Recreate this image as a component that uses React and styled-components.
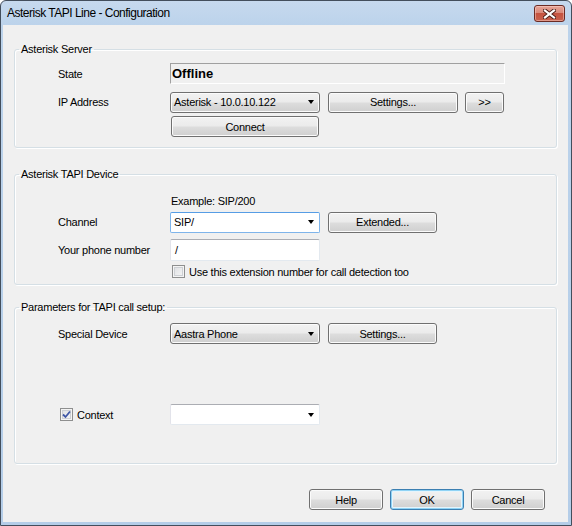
import styled, { createGlobalStyle, css } from "styled-components";

const GlobalStyle = createGlobalStyle`
  html, body {
    margin: 0;
    padding: 0;
    background: #ffffff;
  }
  body {
    font-family: "Liberation Sans", Arial, sans-serif;
    font-size: 11px;
    letter-spacing: -0.25px;
    color: #000;
  }
`;

const Window = styled.div`
  width: 572px;
  height: 526px;
  box-sizing: border-box;
  border: 1px solid #434e5c;
  border-radius: 6px 6px 0 0;
  background: linear-gradient(#c6d9ee, #bcd3eb 24px, #b4cde8);
  padding: 0 3px 3px 2px;
  display: flex;
  flex-direction: column;
  overflow: hidden;
`;

const TitleBar = styled.div`
  height: 24px;
  flex: none;
  display: flex;
  align-items: flex-start;
  justify-content: space-between;
`;

const Title = styled.span`
  margin: 5px 0 0 4px;
  font-size: 12px;
  letter-spacing: -0.5px;
  line-height: 15px;
`;

const CloseButton = styled.div`
  width: 31px;
  height: 17px;
  box-sizing: border-box;
  margin: 4px 3px 0 0;
  border: 1px solid #6b2b24;
  border-radius: 3px;
  background: linear-gradient(#e6a497, #d98a7b 45%, #c55340 50%, #c8624f);
  box-shadow: inset 0 0 0 1px rgba(255, 220, 210, 0.45);
  display: flex;
  align-items: center;
  justify-content: center;
`;

const Client = styled.div`
  flex: 1;
  background: #f0f0f0;
  display: flex;
  flex-direction: column;
  padding: 0 11px;
`;

const Group = styled.fieldset`
  margin: ${(p) => p.$top}px 0 0;
  padding: 0 0 ${(p) => p.$bottom}px;
  border: 1px solid #d5dfe5;
  border-radius: 3px;
  box-shadow: inset 1px 1px 0 #ffffff, 1px 1px 0 #ffffff;
  min-width: 0;
`;

const Legend = styled.legend`
  margin-left: 4px;
  padding: 0 2px;
  line-height: 13px;
`;

const Row = styled.div`
  display: flex;
  align-items: center;
  height: ${(p) => p.$h || 21}px;
  margin-top: ${(p) => p.$mt || 0}px;
  padding-left: 43px;
`;

const Label = styled.span`
  width: 112px;
  flex: none;
  display: flex;
  align-items: center;
`;

const Hint = styled.div`
  margin-top: ${(p) => p.$mt}px;
  padding-left: 156px;
  line-height: 13px;
`;

const StatusBox = styled.div`
  width: 335px;
  height: 21px;
  box-sizing: border-box;
  border: 1px solid;
  border-color: #a0a0a0 #ffffff #ffffff #a0a0a0;
  padding-left: 1px;
  display: flex;
  align-items: center;
  font-weight: bold;
  font-size: 13px;
  letter-spacing: 0;
`;

const buttonFace = css`
  border: 1px solid #707070;
  border-radius: 3px;
  background: linear-gradient(#f2f2f2, #ebebeb 48%, #dddddd 52%, #cfcfcf);
  box-shadow: inset 0 0 0 1px #fbfbfb;
`;

const Combo = styled.div`
  position: relative;
  width: 150px;
  height: 21px;
  box-sizing: border-box;
  padding-left: 3px;
  display: flex;
  align-items: center;
  ${(p) =>
    p.$kind === "list"
      ? buttonFace
      : css`
          background: #ffffff;
          border: 1px solid;
          border-radius: 2px;
          border-color: ${p.$focus
            ? "#569de5 #7eb4ea #7eb4ea #7eb4ea"
            : "#abadb3 #e3e9ef #e3e9ef #e2e3ea"};
        `}
`;

const Arrow = styled.span`
  position: absolute;
  right: 5px;
  top: 50%;
  margin-top: -2px;
  border-left: 3.5px solid transparent;
  border-right: 3.5px solid transparent;
  border-top: 4px solid #000;
`;

const TextField = styled.div`
  width: 150px;
  height: 22px;
  box-sizing: border-box;
  padding-left: 4px;
  display: flex;
  align-items: center;
  background: #ffffff;
  border: 1px solid;
  border-radius: 2px;
  border-color: #abadb3 #e3e9ef #e3e9ef #e2e3ea;
`;

const Button = styled.button`
  width: ${(p) => p.$w}px;
  height: 21px;
  margin-left: ${(p) => p.$ml || 0}px;
  padding: 0;
  font: inherit;
  letter-spacing: inherit;
  color: #000;
  ${buttonFace}
  ${(p) =>
    p.$default &&
    css`
      border-color: #3c7fb1;
      box-shadow: inset 0 0 0 1px #8fd3f5, inset 0 0 0 2px #e6f4fb;
    `}
`;

const Check = styled.span`
  width: 13px;
  height: 13px;
  box-sizing: border-box;
  flex: none;
  margin-left: ${(p) => p.$ml || 0}px;
  margin-right: ${(p) => p.$mr || 4}px;
  border: 1px solid #8e8f8f;
  background: linear-gradient(135deg, #dcdee1, #f7f7f7);
  box-shadow: inset 0 0 0 1px #f4f4f4, inset 0 0 0 2px #cdd0d4;
  display: flex;
  align-items: center;
  justify-content: center;
`;

const CheckRow = styled.div`
  display: flex;
  align-items: center;
  height: 13px;
  margin-top: ${(p) => p.$mt}px;
  padding-left: 156px;
`;

const Footer = styled.div`
  display: flex;
  justify-content: flex-end;
  gap: 7px;
  margin-top: 25px;
  padding-right: 12px;
`;

const CloseGlyph = () => (
  <svg width="13" height="10" viewBox="0 0 13 10">
    <path
      d="M2 1.5 L11 8.5 M11 1.5 L2 8.5"
      stroke="#4a1d17"
      strokeWidth="4"
      strokeLinecap="square"
    />
    <path
      d="M2 1.5 L11 8.5 M11 1.5 L2 8.5"
      stroke="#ffffff"
      strokeWidth="2.2"
      strokeLinecap="square"
    />
  </svg>
);

const Tick = () => (
  <svg width="9" height="9" viewBox="0 0 9 9">
    <path
      d="M1 4.5 L3.5 7 L8 1.5"
      fill="none"
      stroke="#3f57a6"
      strokeWidth="1.8"
    />
  </svg>
);

const App = () => {
  return (
    <>
      <GlobalStyle />
      <Window>
        <TitleBar>
          <Title>Asterisk TAPI Line - Configuration</Title>
          <CloseButton>
            <CloseGlyph />
          </CloseButton>
        </TitleBar>
        <Client>
          <Group $top={18} $bottom={10}>
            <Legend>Asterisk Server</Legend>
            <Row $mt={7} $h={21}>
              <Label>State</Label>
              <StatusBox>Offline</StatusBox>
            </Row>
            <Row $mt={7} $h={22}>
              <Label>IP Address</Label>
              <Combo $kind="list">
                Asterisk - 10.0.10.122
                <Arrow />
              </Combo>
              <Button $w={130} $ml={8}>
                Settings...
              </Button>
              <Button $w={39} $ml={7}>
                &gt;&gt;
              </Button>
            </Row>
            <Row $mt={3} $h={21}>
              <Label />
              <Button $w={148} $ml={1}>
                Connect
              </Button>
            </Row>
          </Group>

          <Group $top={20} $bottom={6}>
            <Legend>Asterisk TAPI Device</Legend>
            <Hint $mt={14}>Example: SIP/200</Hint>
            <Row $mt={3} $h={22}>
              <Label>Channel</Label>
              <Combo $focus>
                SIP/
                <Arrow />
              </Combo>
              <Button $w={109} $ml={8}>
                Extended...
              </Button>
            </Row>
            <Row $mt={6} $h={22}>
              <Label>Your phone number</Label>
              <TextField>/</TextField>
            </Row>
            <CheckRow $mt={4}>
              <Check $ml={1} />
              Use this extension number for call detection too
            </CheckRow>
          </Group>

          <Group $top={16} $bottom={38}>
            <Legend>Parameters for TAPI call setup:</Legend>
            <Row $mt={9} $h={21}>
              <Label>Special Device</Label>
              <Combo $kind="list">
                Aastra Phone
                <Arrow />
              </Combo>
              <Button $w={109} $ml={8}>
                Settings...
              </Button>
            </Row>
            <Row $mt={60} $h={21}>
              <Label>
                <Check $ml={2} $mr={4}>
                  <Tick />
                </Check>
                Context
              </Label>
              <Combo>
                <Arrow />
              </Combo>
            </Row>
          </Group>

          <Footer>
            <Button $w={74}>Help</Button>
            <Button $w={74} $default>
              OK
            </Button>
            <Button $w={74}>Cancel</Button>
          </Footer>
        </Client>
      </Window>
    </>
  );
};

export default App;
